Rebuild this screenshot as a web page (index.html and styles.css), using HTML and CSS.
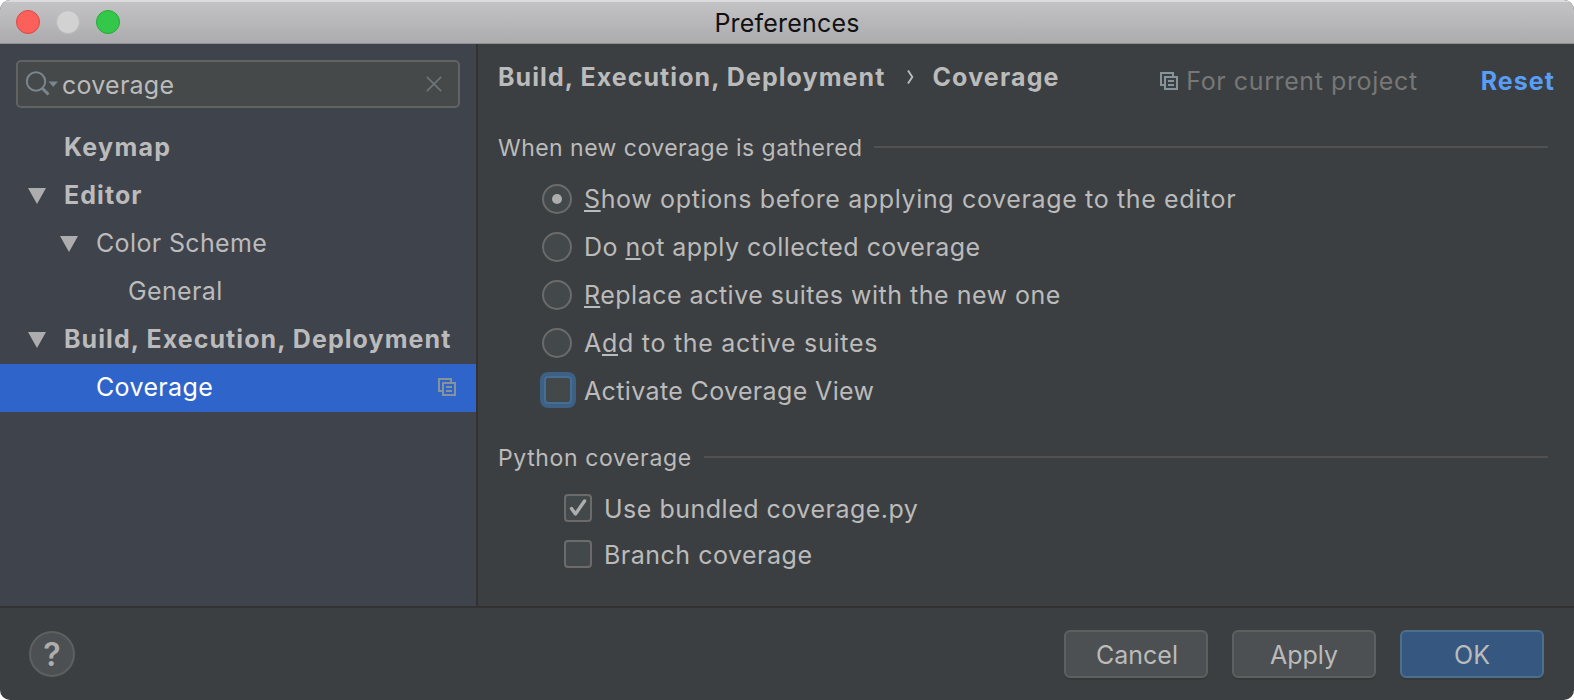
FILE: index.html
```html
<!DOCTYPE html>
<html lang="en">
<head>
<meta charset="utf-8">
<title>Preferences</title>
<link rel="stylesheet" href="styles.css">
</head>
<body>
<svg class="defs" width="0" height="0">
  <symbol id="copy" viewBox="0 0 18 18">
    <path d="M13 4V1H1V13H5" fill="none" stroke="currentColor" stroke-width="2"/>
    <rect x="5" y="5" width="12" height="12" fill="none" stroke="currentColor" stroke-width="2"/>
    <path d="M8 9H14M8 13H14" stroke="currentColor" stroke-width="2"/>
  </symbol>
  <symbol id="arrow" viewBox="0 0 18 16"><path d="M0 0H18L9 16Z" fill="currentColor"/></symbol>
</svg>
<div class="window">
  <header class="titlebar">
    <div class="lights"><i class="light red"></i><i class="light gray"></i><i class="light green"></i></div>
    <span class="title">Preferences</span>
  </header>
  <div class="main">
    <aside class="sidebar">
      <div class="search">
        <svg class="lens" width="34" height="28" viewBox="0 0 34 28">
          <circle cx="10" cy="10.500" r="9.2" fill="none" stroke="#7a868e" stroke-width="2"/>
          <path d="M16 17L22.500 23.500" stroke="#7a868e" stroke-width="3"/>
          <path d="M22.500 10.500H32L27.200 16Z" fill="#7a868e"/>
        </svg>
        <span class="query">coverage</span>
        <svg class="clear" width="16" height="16" viewBox="0 0 16 16"><path d="M.8 .8L15.200 15.200M15.200 .8L.8 15.200" stroke="#6d7476" stroke-width="1.800"/></svg>
      </div>
      <div class="tree">
        <div class="node bold"><span class="slot"></span><span class="label t-keymap">Keymap</span></div>
        <div class="node bold"><span class="slot"><svg width="18" height="16"><use href="#arrow"/></svg></span><span class="label">Editor</span></div>
        <div class="node level2"><span class="slot"><svg width="18" height="16"><use href="#arrow"/></svg></span><span class="label">Color Scheme</span></div>
        <div class="node level3"><span class="slot"></span><span class="label">General</span></div>
        <div class="node bold"><span class="slot"><svg width="18" height="16"><use href="#arrow"/></svg></span><span class="label">Build, Execution, Deployment</span></div>
        <div class="node level2 selected"><span class="slot"></span><span class="label">Coverage</span><svg class="copy" width="18" height="18"><use href="#copy"/></svg></div>
      </div>
    </aside>
    <section class="content">
      <div class="heading">
        <div class="crumbs"><span>Build, Execution, Deployment</span><svg class="chevron" width="7" height="14" viewBox="0 0 7 14"><path d="M1 .5L5.300 7L1 13.500" fill="none" stroke="#bbb" stroke-width="1.900"/></svg><span class="t-crumb">Coverage</span></div>
        <div class="scope"><svg width="18" height="18"><use href="#copy"/></svg><span class="t-scope">For current project</span></div>
        <a class="reset">Reset</a>
      </div>
      <div class="group"><span class="t-when">When new coverage is gathered</span><i class="rule"></i></div>
      <div class="options">
        <label class="option"><i class="radio on"></i><span class="t-show"><u>S</u>how options before applying coverage to the editor</span></label>
        <label class="option"><i class="radio"></i><span class="t-donot">Do <u>n</u>ot apply collected coverage</span></label>
        <label class="option"><i class="radio"></i><span><u>R</u>eplace active suites with the new one</span></label>
        <label class="option"><i class="radio"></i><span class="t-add">A<u>d</u>d to the active suites</span></label>
        <label class="option"><i class="box focus"></i><span class="t-activate">Activate Coverage View</span></label>
      </div>
      <div class="group python"><span class="t-python">Python coverage</span><i class="rule"></i></div>
      <div class="checks">
        <label class="check"><i class="box"><svg width="18" height="18" viewBox="0 0 18 18"><path d="M2.500 9.500L6.500 15L15.500 2" fill="none" stroke="#adadad" stroke-width="3.400" stroke-linecap="round" stroke-linejoin="round"/></svg></i><span>Use bundled coverage.py</span></label>
        <label class="check"><i class="box"></i><span>Branch coverage</span></label>
      </div>
    </section>
  </div>
  <footer class="footer">
    <button class="help">?</button>
    <div class="buttons">
      <button class="btn cancel">Cancel</button>
      <button class="btn">Apply</button>
      <button class="btn primary">OK</button>
    </div>
  </footer>
</div>
</body>
</html>
```
FILE: styles.css
```css
* { box-sizing: border-box; }
body { margin: 0; background: #fff; font-family: Inter, sans-serif; font-size: 25px; line-height: 30px; color: #bbb; }
svg { display: block; flex: none; }
.defs { position: absolute; }
span, a { white-space: nowrap; }
.window { width: 1574px; height: 700px; border-radius: 10px; overflow: hidden; background: #3c3f41; display: flex; flex-direction: column; }

.titlebar { height: 44px; flex: none; display: grid; grid-template-columns: 1fr auto 1fr; align-items: center; background: linear-gradient(#c3c2c4, #acabad); border-top: 2px solid #dcdbdd; border-bottom: 1px solid #8f8f91; }
.lights { display: flex; gap: 16px; padding-left: 16px; margin-top: -1px; }
.light { width: 24px; height: 24px; border-radius: 50%; border: 1px solid; }
.red { background: #fc605b; border-color: #df4642; }
.gray { background: #d2d2d2; border-color: #bcbcbc; }
.green { background: #34c84a; border-color: #24ac34; }
.title { color: #111; letter-spacing: .2px; }

.main { height: 564px; flex: none; display: flex; border-bottom: 2px solid #323232; }
.sidebar { width: 478px; flex: none; background: #3f434c; border-right: 2px solid #323232; padding-top: 16px; }
.search { height: 48px; margin: 0 16px; border: 2px solid #616463; border-radius: 5px; background: #45494a; display: flex; align-items: center; padding: 0 16px 0 8px; }
.lens { margin-top: 1px; }
.query { flex: 1; padding-left: 2px; padding-top: 2px; letter-spacing: .25px; }
.tree { padding-top: 16px; }
.node { height: 48px; display: flex; align-items: center; padding: 0 20px 0 28px; letter-spacing: .36px; }
.label { padding-bottom: 2px; }
.slot { width: 36px; color: #adadad; flex: none; }
.level2 { padding-left: 60px; }
.level3 { padding-left: 92px; }
.bold { font-weight: 700; letter-spacing: 1.07px; }
.t-keymap { letter-spacing: 1.3px; }
.selected { background: #2f65ca; color: #fff; }
.copy { margin-left: auto; margin-top: -2px; color: #87939a; }

.content { flex: 1; padding: 17px 26px 0 20px; }
.heading { display: flex; align-items: center; height: 40px; margin-right: -7px; }
.crumbs { display: flex; align-items: center; font-weight: 700; letter-spacing: 1.07px; margin-top: -8px; }
.t-crumb { letter-spacing: 1.18px; }
.chevron { margin: 0 18px 0 22px; }
.scope { margin-left: auto; display: flex; align-items: center; gap: 8px; color: #777; }
.t-scope { letter-spacing: .6px; }
.scope svg { color: #87939a; }
.reset { color: #589df6; font-weight: 700; letter-spacing: 1.05px; margin-left: 63px; }
.group { display: flex; align-items: center; gap: 12px; margin-top: 30px; font-size: 23px; }
.group span { padding-top: 2px; }
.t-when { letter-spacing: .47px; margin-right: -1px; }
.rule { flex: 1; height: 2px; background: #515151; }
.options { margin-top: 12px; padding-left: 44px; letter-spacing: .5px; }
.option { height: 48px; display: flex; align-items: center; gap: 12px; }
.t-show { letter-spacing: .64px; }
.t-donot { letter-spacing: .46px; }
.t-add { letter-spacing: .72px; }
.t-activate { letter-spacing: .36px; margin-left: -2px; }
.radio { width: 30px; height: 30px; flex: none; border: 2px solid #6b6b6b; border-radius: 50%; background: #43494a; display: grid; place-items: center; }
.on::after { content: ""; width: 10px; height: 10px; border-radius: 50%; background: #adadad; }
.box { width: 28px; height: 28px; flex: none; border: 2px solid #6b6b6b; border-radius: 4px; background: #43494a; display: grid; place-items: center; }
.box.focus { margin: -2px 2px 0; border-color: #466d94; box-shadow: 0 0 0 4px #3d6185; }
u { text-decoration: underline; text-decoration-thickness: 2px; text-underline-offset: 2px; text-decoration-skip-ink: none; }
.python { margin-top: 26px; }
.t-python { letter-spacing: .62px; }
.checks { padding: 12px 0 0 66px; letter-spacing: .5px; }
.check { height: 46px; display: flex; align-items: center; gap: 12px; }
.check span { padding-top: 2px; }

.footer { flex: 1; display: flex; align-items: center; justify-content: space-between; padding: 0 30px 0 29px; }
.help { width: 46px; height: 46px; border-radius: 50%; border: 2px solid #5e6060; background: #4c5052; color: #adadad; font: 600 32px/40px Inter, sans-serif; padding: 2px 0 0; }
.buttons { display: flex; gap: 24px; }
.btn { width: 144px; height: 48px; border: 2px solid #5e6060; border-radius: 6px; background: #4c5052; color: #bbb; font: 25px/30px Inter, sans-serif; padding: 2px 0 0; box-shadow: 0 2px 1px #36393a; }
.cancel { padding-left: 2px; }
.primary { background: #365880; border-color: #4c708c; }
```
